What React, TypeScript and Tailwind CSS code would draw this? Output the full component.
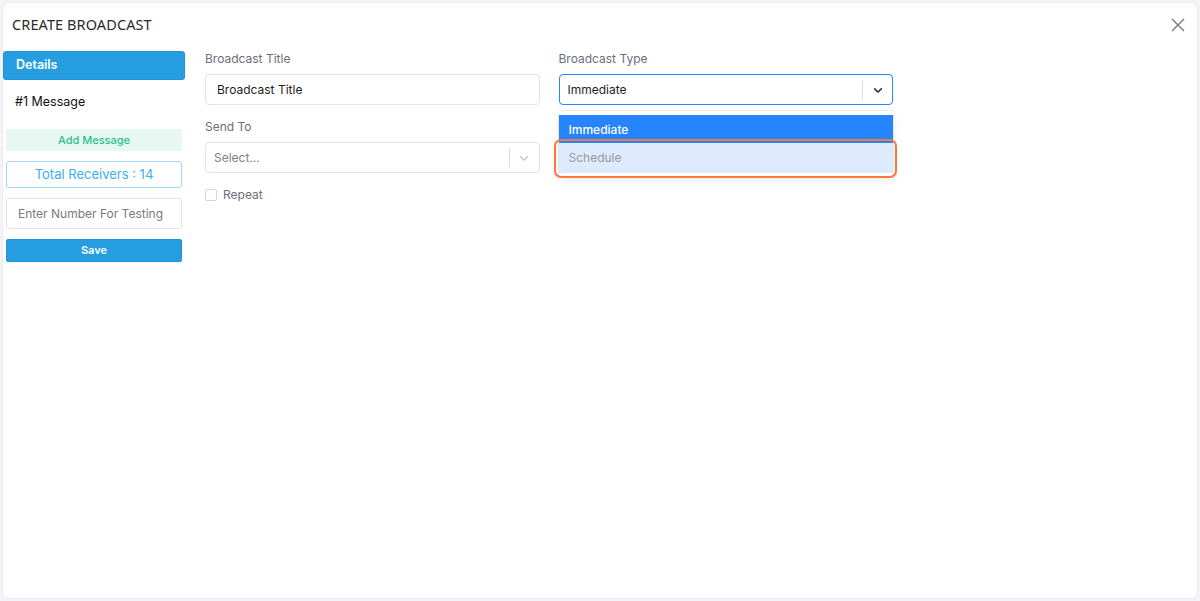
import React from "react";

function Chevron({ color }: { color: string }) {
  return (
    <svg width="14" height="14" viewBox="0 0 20 20" fill={color}>
      <path d="M4.516 7.548c0.436-0.446 1.043-0.481 1.576 0l3.908 3.747 3.908-3.747c0.533-0.481 1.141-0.446 1.574 0 0.436 0.445 0.408 1.197 0 1.615-0.406 0.418-4.695 4.502-4.695 4.502-0.217 0.223-0.502 0.335-0.787 0.335s-0.57-0.112-0.789-0.335c0 0-4.287-4.084-4.695-4.502s-0.436-1.17 0-1.615z" />
    </svg>
  );
}

export default function App() {
  return (
    <div className="w-[1200px] h-[601px] bg-[#f3f3f8] p-[2px]" style={{ fontFamily: "Inter, 'Noto Sans', sans-serif" }}>
      <div className="h-full bg-white rounded-[8px] border border-[#ececf2] flex flex-col">
        <div className="flex items-center justify-between h-[43px] pl-[9px] pr-[12px]">
          <span className="text-[14.5px] text-[#2b2b2b] tracking-[0.1px]" style={{ fontFamily: "'Noto Sans', sans-serif" }}>CREATE BROADCAST</span>
          <svg width="14" height="14" viewBox="0 0 14 14" stroke="#777" strokeWidth="1.4" className="mt-[1px]">
            <path d="M1 1 L13 13 M13 1 L1 13" />
          </svg>
        </div>
        <div className="flex pt-[5px]">
          <div className="w-[182px] shrink-0 flex flex-col">
            <div className="h-[29px] bg-[#259de0] rounded-[3px] border border-[#1f93d4] flex items-center pl-[12px] text-white text-[12.5px] font-semibold">Details</div>
            <div className="h-[49px] flex items-center pl-[12px] pb-[5px] text-[12.5px] text-[#111]">#1 Message</div>
            <div className="mx-[3px] flex flex-col">
              <div className="h-[22px] bg-[#e7f8f2] rounded-[3px] flex items-center justify-center text-[11px] font-medium text-[#2dbf8a]">Add Message</div>
              <div className="h-[27px] mt-[10px] border border-[#9fd7f5] rounded-[3px] flex items-center justify-center text-[13px] text-[#36b0ee]">Total Receivers : 14</div>
              <div className="h-[31px] mt-[10px] border border-[#e4e4e4] rounded-[3px] flex items-center pl-[11px] text-[12px] text-[#7a7a7a]">Enter Number For Testing</div>
              <div className="h-[23px] mt-[10px] bg-[#259de0] rounded-[2px] border border-[#1f93d4] flex items-center justify-center text-[11px] font-semibold text-white">Save</div>
            </div>
          </div>
          <div className="ml-[20px] -mt-[1px] w-[688px] grid grid-cols-2 gap-x-[19px] content-start">
            <div className="flex flex-col">
              <div className="h-[18px] flex items-center text-[12px] text-[#6b6f7a]">Broadcast Title</div>
              <div className="h-[31px] mt-[6px] border border-[#e3e3e8] rounded-[4px] flex items-center pl-[11px] text-[12px] text-[#1e1e1e]">Broadcast Title</div>
              <div className="h-[18px] flex items-center text-[12px] text-[#6b6f7a] mt-[13px]">Send To</div>
              <div className="h-[31px] mt-[6px] border border-[#e3e3e8] rounded-[4px] flex items-center pl-[8px] text-[12px] text-[#808080]">
                <span className="flex-1">Select...</span>
                <span className="w-px h-[18px] bg-[#dcdcdc]"></span>
                <span className="w-[29px] flex justify-center"><Chevron color="#cccccc" /></span>
              </div>
              <div className="flex items-center mt-[16px] h-[12px]">
                <span className="w-[12px] h-[12px] border border-[#d6d6d6] rounded-[2px]"></span>
                <span className="ml-[6px] text-[12px] text-[#6b6f7a]">Repeat</span>
              </div>
            </div>
            <div className="flex flex-col">
              <div className="h-[18px] flex items-center text-[12px] text-[#6b6f7a]">Broadcast Type</div>
              <div className="relative mt-[6px]">
                <div className="h-[31px] border border-[#2684ff] rounded-[4px] flex items-center pl-[8px] text-[12px] text-[#1e1e1e]">
                  <span className="flex-1">Immediate</span>
                  <span className="w-px h-[18px] bg-[#dcdcdc]"></span>
                  <span className="w-[29px] flex justify-center"><Chevron color="#333333" /></span>
                </div>
                <div className="absolute left-0 right-0 top-[37px] bg-white rounded-[4px] shadow-[0_0_0_1px_rgba(0,0,0,0.06),0_4px_11px_rgba(0,0,0,0.08)] py-[4px]">
                  <div className="h-[28px] bg-[#2684ff] flex items-center pl-[10px] pt-[2px] text-[12px] font-medium text-white">Immediate</div>
                  <div className="h-[30px] bg-[#deebff] flex items-center pl-[10px] text-[12px] text-[#999999]">Schedule</div>
                  <div className="absolute left-[-5px] right-[-4px] top-[28px] h-[39px] border-2 border-[#f5793b] rounded-[7px]"></div>
                </div>
              </div>
            </div>
          </div>
        </div>
      </div>
    </div>
  );
}
